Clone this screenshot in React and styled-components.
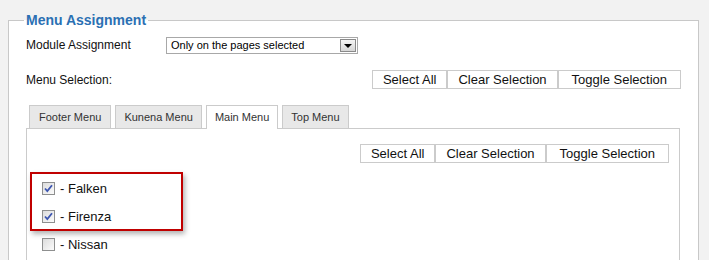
import styled, { createGlobalStyle } from 'styled-components';

const GlobalStyle = createGlobalStyle`
  body {
    margin: 0;
    background: #f2f2f2;
    font-family: "Liberation Sans", Arial, sans-serif;
  }
`;

const Page = styled.div`
  padding: 12px 10px 0 8px;
  height: 260px;
  box-sizing: border-box;
  overflow: hidden;
`;

const Fieldset = styled.fieldset`
  margin: 0;
  padding: 0 17px 20px 17px;
  border: 1px solid #c8c8c8;
  background: #fff;
  min-width: 0;
`;

const Legend = styled.legend`
  padding: 0 2px;
  margin-left: -2px;
  font-size: 14px;
  line-height: 16px;
  font-weight: bold;
  color: #2b70b3;
`;

const Row = styled.div`
  display: flex;
  align-items: center;
  justify-content: ${(p) => p.$justify || 'flex-start'};
  margin-top: ${(p) => p.$top}px;
  height: ${(p) => p.$height}px;
`;

const Label = styled.span`
  width: ${(p) => (p.$width ? `${p.$width}px` : 'auto')};
  font-size: 12px;
  color: #111;
`;

const Select = styled.div`
  box-sizing: border-box;
  width: 192px;
  height: 17px;
  border: 1px solid #a8a8a8;
  display: flex;
  align-items: center;
  justify-content: space-between;
  padding: 0 1px 0 4px;
  font-size: 11px;
  color: #000;
`;

const Arrow = styled.span`
  box-sizing: border-box;
  width: 16px;
  height: 13px;
  border: 1px solid #8a8a8a;
  background: linear-gradient(#f4f4f4, #d6d6d6);
  display: flex;
  align-items: center;
  justify-content: center;
  &::after {
    content: '';
    margin-top: 2px;
    border-left: 4px solid transparent;
    border-right: 4px solid transparent;
    border-top: 4px solid #000;
  }
`;

const ButtonGroup = styled.div`
  display: flex;
`;

const Button = styled.button`
  box-sizing: border-box;
  height: 19px;
  padding: 0 ${(p) => p.$pad || 10}px;
  border: 1px solid #cbcbcb;
  background: #fff;
  font-family: inherit;
  font-size: 13px;
  color: #111;
  cursor: pointer;
`;

const Tabs = styled.div`
  display: flex;
  gap: 4px;
  padding-left: 3px;
  margin-top: 16px;
  position: relative;
  z-index: 1;
`;

const Tab = styled.div`
  box-sizing: border-box;
  height: ${(p) => (p.$active ? 24 : 23)}px;
  margin-bottom: ${(p) => (p.$active ? -1 : 0)}px;
  padding: 5px ${(p) => p.$pad}px 0;
  border: 1px solid #cbcbcb;
  border-bottom: none;
  background: ${(p) => (p.$active ? '#fff' : '#e8e8e8')};
  font-size: 11px;
  color: #333;
`;

const Panel = styled.div`
  border: 1px solid #cbcbcb;
  margin-right: 1px;
  padding: 15px 10px 0 15px;
  height: 140px;
`;

const List = styled.div`
  position: relative;
  margin-top: 11px;
`;

const Item = styled.label`
  display: flex;
  align-items: center;
  height: 28px;
  gap: 5px;
  font-size: 13px;
  color: #111;
`;

const Box = styled.span`
  box-sizing: border-box;
  width: 13px;
  height: 13px;
  border: 1px solid #8e8f8f;
  background: linear-gradient(135deg, #dcdcdc, #fbfbfb);
  display: flex;
  align-items: center;
  justify-content: center;
`;

const Highlight = styled.div`
  position: absolute;
  left: -12px;
  top: -2px;
  width: 153px;
  height: 59px;
  box-sizing: border-box;
  border: 2px solid #c00000;
  box-shadow: 2px 3px 5px rgba(0, 0, 0, 0.3);
  pointer-events: none;
`;

const Check = () => (
  <svg width="9" height="9" viewBox="0 0 9 9">
    <path d="M1 4.5 L3.3 7 L8 1.2" fill="none" stroke="#3d56b0" strokeWidth="1.8" />
  </svg>
);

const items = [
  { name: 'Falken', checked: true },
  { name: 'Firenza', checked: true },
  { name: 'Nissan', checked: false },
];

const tabs = [
  { name: 'Footer Menu', pad: 9 },
  { name: 'Kunena Menu', pad: 8 },
  { name: 'Main Menu', pad: 8, active: true },
  { name: 'Top Menu', pad: 8 },
];

const SelectionButtons = () => (
  <ButtonGroup>
    <Button $pad={10}>Select All</Button>
    <Button $pad={10}>Clear Selection</Button>
    <Button $pad={13}>Toggle Selection</Button>
  </ButtonGroup>
);

export default function App() {
  return (
    <Page>
      <GlobalStyle />
      <Fieldset>
        <Legend>Menu Assignment</Legend>
        <Row $top={8} $height={18}>
          <Label $width={140}>Module Assignment</Label>
          <Select>
            Only on the pages selected
            <Arrow />
          </Select>
        </Row>
        <Row $top={16} $height={19} $justify="space-between">
          <Label>Menu Selection:</Label>
          <SelectionButtons />
        </Row>
        <Tabs>
          {tabs.map((t) => (
            <Tab key={t.name} $pad={t.pad} $active={t.active}>
              {t.name}
            </Tab>
          ))}
        </Tabs>
        <Panel>
          <Row $top={0} $height={19} $justify="flex-end">
            <SelectionButtons />
          </Row>
          <List>
            {items.map((it) => (
              <Item key={it.name}>
                <Box>{it.checked && <Check />}</Box>- {it.name}
              </Item>
            ))}
            <Highlight />
          </List>
        </Panel>
      </Fieldset>
    </Page>
  );
}
